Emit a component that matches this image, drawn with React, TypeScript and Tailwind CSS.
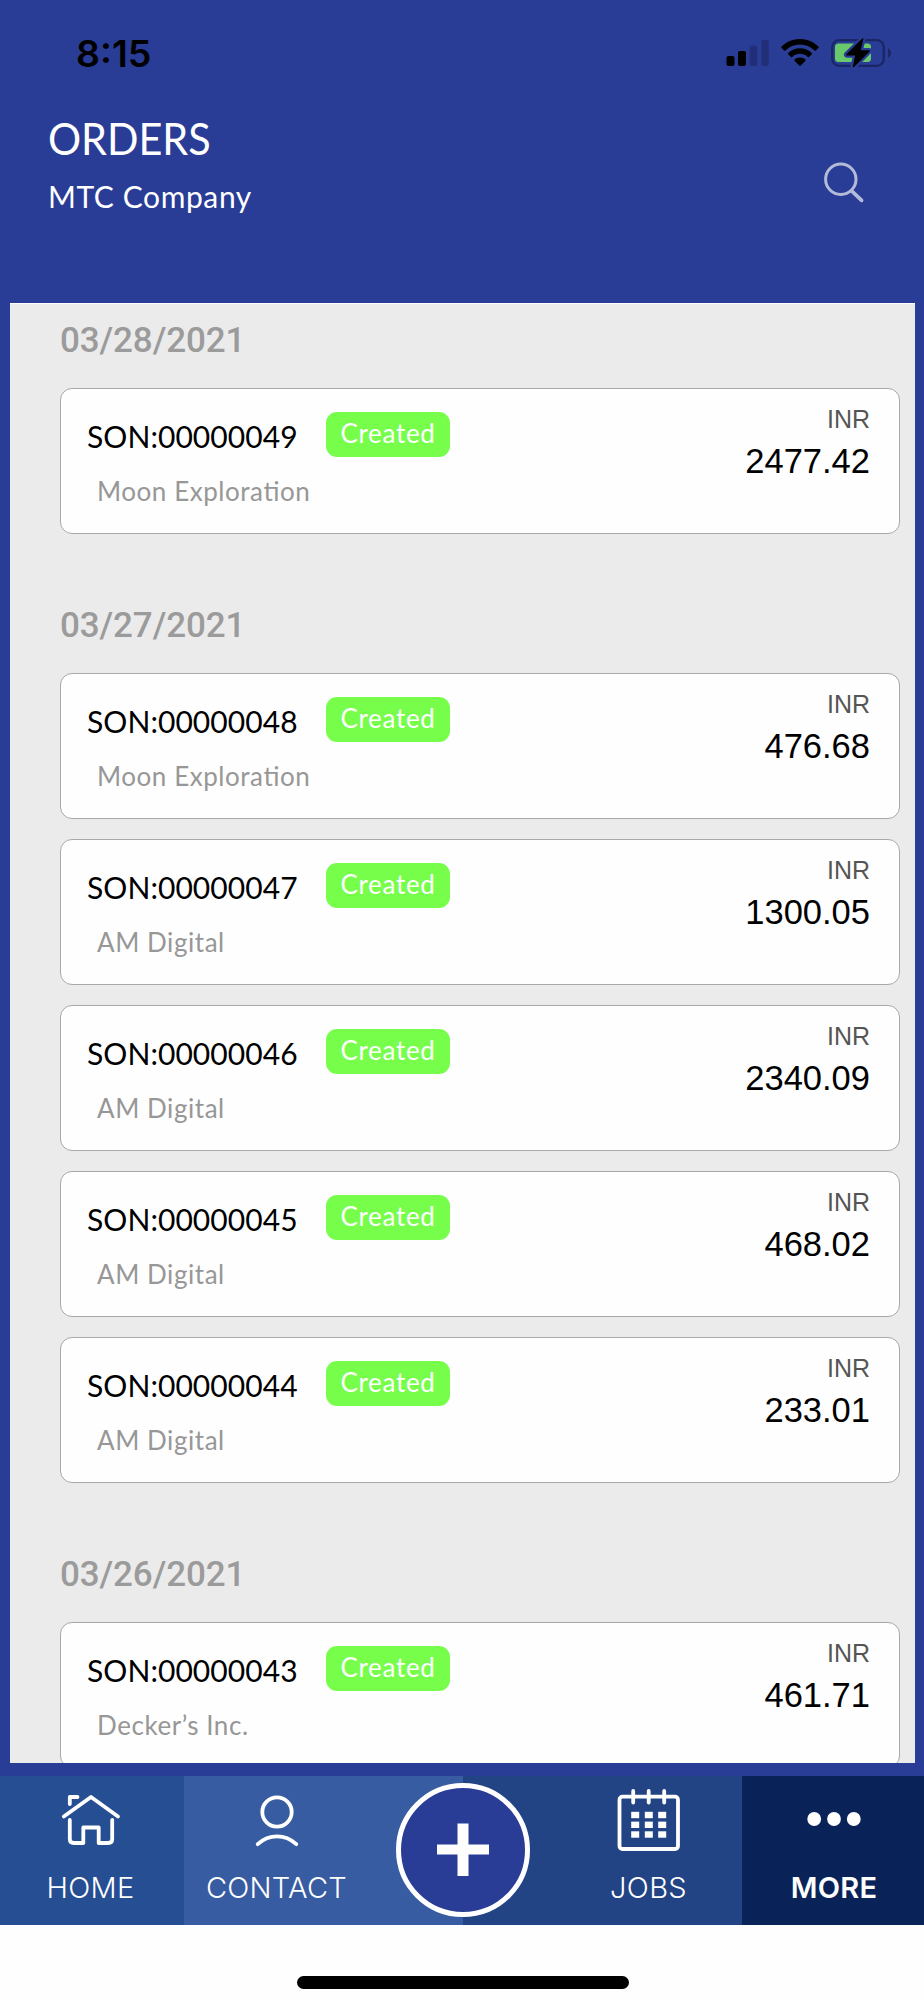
import React from 'react';

interface Order {
  number: string;
  customer: string;
  amount: string;
}

interface OrderGroup {
  date: string;
  orders: Order[];
}

const ORDER_GROUPS: OrderGroup[] = [
  {
    date: '03/28/2021',
    orders: [{ number: '00000049', customer: 'Moon Exploration', amount: '2477.42' }],
  },
  {
    date: '03/27/2021',
    orders: [
      { number: '00000048', customer: 'Moon Exploration', amount: '476.68' },
      { number: '00000047', customer: 'AM Digital', amount: '1300.05' },
      { number: '00000046', customer: 'AM Digital', amount: '2340.09' },
      { number: '00000045', customer: 'AM Digital', amount: '468.02' },
      { number: '00000044', customer: 'AM Digital', amount: '233.01' },
    ],
  },
  {
    date: '03/26/2021',
    orders: [{ number: '00000043', customer: 'Decker’s Inc.', amount: '461.71' }],
  },
];

const SignalIcon = () => (
  <svg width="43" height="28" viewBox="0 0 43 28">
    <rect x="0.5" y="17" width="8" height="10" rx="2" />
    <rect x="12" y="12" width="8" height="15" rx="2" />
    <rect x="23.7" y="6.5" width="7.5" height="20.5" rx="2" fill="#222f78" />
    <rect x="35.3" y="1" width="7.5" height="26" rx="2" fill="#222f78" />
  </svg>
);

const WifiIcon = () => (
  <svg width="38" height="28" viewBox="0 0 38 28">
    <path d="M19 0C26.2 0 32.8 2.8 37.4 7.6C37.8 8 37.8 8.5 37.4 8.9L34.8 11.4C34.4 11.8 33.9 11.8 33.5 11.4C29.7 7.8 24.6 5.6 19 5.6C13.4 5.6 8.3 7.8 4.5 11.4C4.1 11.8 3.6 11.8 3.2 11.4L0.6 8.9C0.2 8.5 0.2 8 0.6 7.6C5.2 2.8 11.8 0 19 0Z" />
    <path d="M19 9.3C23.6 9.3 27.7 11.1 30.8 14C31.2 14.4 31.2 14.9 30.8 15.3L28.1 17.9C27.7 18.3 27.2 18.3 26.8 17.9C24.8 16 22.1 14.8 19 14.8C15.9 14.8 13.2 16 11.2 17.9C10.8 18.3 10.3 18.3 9.9 17.9L7.2 15.3C6.8 14.9 6.8 14.4 7.2 14C10.3 11.1 14.4 9.3 19 9.3Z" />
    <path d="M19 18.5C21.1 18.5 22.9 19.2 24.4 20.4C24.8 20.8 24.8 21.3 24.4 21.7L19.7 26.5C19.3 26.9 18.7 26.9 18.3 26.5L13.6 21.7C13.2 21.3 13.2 20.8 13.6 20.4C15.1 19.2 16.9 18.5 19 18.5Z" />
  </svg>
);

const BatteryIcon = () => (
  <svg width="61" height="30" viewBox="0 0 61 30">
    <rect x="1.2" y="2.2" width="51.6" height="25.6" rx="7" fill="none" stroke="#1b2765" strokeWidth="2.3" />
    <rect x="4" y="5.5" width="36" height="18.5" rx="3.5" fill="#69c869" />
    <path d="M57 10.3C59 11.3 60 13 60 15C60 17 59 18.7 57 19.7Z" fill="#1b2765" />
    <path
      d="M31.3 0.6L15.3 16.2C14.8 16.7 15.2 17.4 15.8 17.4H24.2L21.8 28.4C21.6 29.3 22.5 29.6 23 29L38.6 13.4C39.1 12.9 38.8 12.2 38.2 12.2H29.7L32.4 1.3C32.6 0.5 31.8 0.1 31.3 0.6Z"
      stroke="#293c96"
      strokeWidth="4.5"
      paintOrder="stroke"
    />
  </svg>
);

const SearchIcon = () => (
  <svg width="42" height="42" viewBox="0 0 42 42" fill="none" stroke="#b3bbd8" strokeLinecap="round">
    <circle cx="17.8" cy="17.3" r="15.2" strokeWidth="3" />
    <path d="M28.6 28.8L38.6 38.4" strokeWidth="3.7" />
  </svg>
);

const HomeIcon = () => (
  <svg width="60" height="54" viewBox="0 0 60 54" fill="none" stroke="white" strokeWidth="3.8" strokeLinecap="round" strokeLinejoin="round">
    <path d="M2.8 24.5L30 5L57 24.5" />
    <path d="M8.8 12V5H16.5" />
    <path d="M8.8 28V47C8.8 49.5 10.3 51 12.8 51H22.3V35.5H37.7V51H47.2C49.7 51 51.2 49.5 51.2 47V28" />
  </svg>
);

const ContactIcon = () => (
  <svg width="44" height="54" viewBox="0 0 44 54" fill="none" stroke="white" strokeWidth="3.8" strokeLinecap="round">
    <circle cx="22" cy="19" r="14.7" />
    <path d="M2.7 51.2C14 40.8 30 40.8 41.3 51.2" />
  </svg>
);

const JobsIcon = () => (
  <svg width="64" height="62" viewBox="0 0 64 62" fill="none" stroke="white" strokeWidth="3.8">
    <rect x="2.5" y="7.7" width="58.5" height="52.3" rx="3" />
    <path d="M16.2 2V13.5M31.7 2V13.5M47.2 2V13.5" strokeLinecap="round" />
    <g fill="white" stroke="none">
      {[22.8, 32.6, 42.3].map((y) =>
        [14.2, 27.8, 41.2].map((x) => <rect key={`${x}-${y}`} x={x} y={y} width="8" height="6.4" />)
      )}
    </g>
  </svg>
);

const MoreIcon = () => (
  <svg width="56" height="16" viewBox="0 0 56 16" fill="white">
    <circle cx="8.2" cy="8" r="6.9" />
    <circle cx="28" cy="8" r="6.9" />
    <circle cx="47.8" cy="8" r="6.9" />
  </svg>
);

const OrderCard: React.FC<{ order: Order }> = ({ order }) => (
  <div className="flex justify-between h-[146px] bg-[#fefefe] border border-[#a8a8a8] rounded-xl pl-[26px] pr-[29px]">
    <div>
      <div className="flex items-start">
        <span className="w-[239px] mt-8 text-[30px] leading-none tracking-[0.06px] text-black whitespace-nowrap">
          SON:{order.number}
        </span>
        <span className="mt-[23px] w-[124px] h-[45px] pt-2 rounded-[11px] bg-[#76fe4b] text-center text-[26px] leading-none tracking-[0.7px] text-white">
          Created
        </span>
      </div>
      {/* explicit liga keeps the "ti" ligature on despite the tracking */}
      <p className="mt-[21px] ml-[10px] text-[26px] leading-none tracking-[0.55px] [font-feature-settings:'liga'_1] text-[#979797]">
        {order.customer}
      </p>
    </div>
    <div className="pt-[18px] text-right font-['Liberation_Sans',Arial,sans-serif]">
      <p className="text-[25px] leading-none text-[#555555]">INR</p>
      <p className="mt-3 text-[34.5px] leading-none text-black">{order.amount}</p>
    </div>
  </div>
);

interface TabProps {
  label: string;
  className: string;
  iconClassName: string;
  labelClassName: string;
  children: React.ReactNode;
}

const Tab: React.FC<TabProps> = ({ label, className, iconClassName, labelClassName, children }) => (
  <button className={`flex flex-col ${className}`}>
    <span className="flex flex-col items-center w-[184px]">
      <span className={`flex items-center justify-center h-[97px] ${iconClassName}`}>{children}</span>
      <span className={`text-[29px] leading-none text-white ${labelClassName}`}>{label}</span>
    </span>
  </button>
);

const App: React.FC = () => {
  return (
    <div className="w-[924px] h-[2000px] flex flex-col overflow-hidden bg-[#293c96] font-[Lato,Carlito,sans-serif]">
      {/* Status bar */}
      <div className="flex justify-between h-[115px] pt-[35px] pl-[76px] pr-8">
        <span className="font-['Inter',sans-serif] font-semibold text-[37.5px] leading-none text-black">8:15</span>
        <div className="flex items-start pt-[3px]">
          <div className="pt-px mr-3"><SignalIcon /></div>
          <div className="pt-px mr-3"><WifiIcon /></div>
          <BatteryIcon />
        </div>
      </div>

      {/* Header */}
      <header className="flex justify-between h-[188px] pl-12 pr-[59px] text-white">
        <div>
          <h1 className="w-fit pt-px text-[44px] leading-none origin-left scale-x-[0.94]">ORDERS</h1>
          <p className="mt-[21px] text-[30px] leading-none tracking-[0.6px]">MTC Company</p>
        </div>
        <button className="self-start mt-[47px]"><SearchIcon /></button>
      </header>

      {/* Orders list */}
      <main className="h-[1460px] ml-[10px] mr-[9px] pl-[50px] pr-[15px] overflow-hidden bg-[#ebebeb] border-t border-white">
        {ORDER_GROUPS.map((group) => (
          <section key={group.date} className="mb-[55px]">
            <h2 className="h-[84px] pt-[19px] font-['Roboto',sans-serif] font-medium text-[35px] leading-none tracking-[-0.12px] text-[#9b9b9b]">
              {group.date}
            </h2>
            <div className="flex flex-col gap-5">
              {group.orders.map((order) => (
                <OrderCard key={order.number} order={order} />
              ))}
            </div>
          </section>
        ))}
      </main>

      {/* Bottom navigation */}
      <nav className="relative flex h-[149px] mt-[13px] font-['Inter',sans-serif]">
        <Tab label="HOME" className="w-[184px] bg-[#264e93]" iconClassName="pb-3 pr-[2px]" labelClassName="font-light tracking-[0.3px] pr-[3px]">
          <HomeIcon />
        </Tab>
        <Tab label="CONTACT" className="w-[279px] bg-[#385ca1]" iconClassName="pb-[10px] pl-px" labelClassName="font-light tracking-[0.25px] pl-px">
          <ContactIcon />
        </Tab>
        <Tab label="JOBS" className="w-[279px] items-end bg-[#234484]" iconClassName="pb-[10px] pr-[2px]" labelClassName="font-light tracking-[0.4px] pr-[3px]">
          <JobsIcon />
        </Tab>
        <Tab label="MORE" className="w-[182px] bg-[#092358]" iconClassName="pb-3" labelClassName="font-semibold tracking-[0.2px]">
          <MoreIcon />
        </Tab>
        <button className="absolute left-[396px] top-[7px] w-[134px] h-[134px] rounded-full border-[5px] border-white bg-[#293c96] flex items-center justify-center">
          <svg width="52" height="54" viewBox="0 0 52 54" fill="#fefefe">
            <rect x="0" y="21.5" width="52" height="10" />
            <rect x="20.5" y="0.5" width="11" height="52.5" />
          </svg>
        </button>
      </nav>

      {/* Home indicator */}
      <div className="flex-1 bg-[#fefefe] flex justify-center pl-[2px]">
        <div className="mt-[51px] w-[332px] h-[12.5px] rounded-full bg-black" />
      </div>
    </div>
  );
};

export default App;
